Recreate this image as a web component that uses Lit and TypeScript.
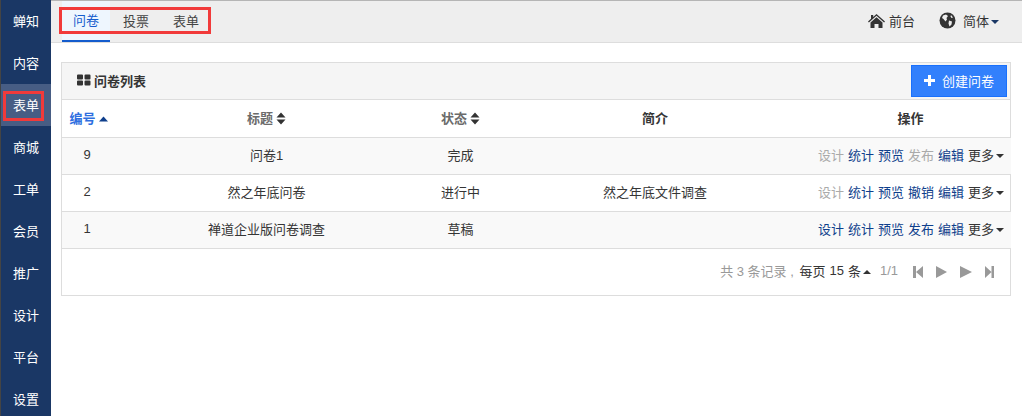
import { LitElement, html, css } from "lit";
import { customElement } from "lit/decorators.js";

const NAV = ["蝉知", "内容", "表单", "商城", "工单", "会员", "推广", "设计", "平台", "设置"];
const ROWS = [
  { id: "9", title: "问卷1", status: "完成", desc: "", off: [true, false, false, true], last: "发布" },
  { id: "2", title: "然之年底问卷", status: "进行中", desc: "然之年底文件调查", off: [true, false, false, false], last: "撤销" },
  { id: "1", title: "禅道企业版问卷调查", status: "草稿", desc: "", off: [false, false, false, false], last: "发布" },
];

const sortIcon = html`<svg class="sort" width="10" height="13" viewBox="0 0 10 13"><path d="M5 .5 9.500 5.500H.5zM.5 7.500h9L5 12.500z" fill="#333"/></svg>`;
const upIcon = html`<svg class="up" width="9" height="6" viewBox="0 0 9 6"><path d="M4.500 .5 9 5.500H0z" fill="#0f3f8c"/></svg>`;
const caret = (c = "#333") => html`<svg class="caret" width="8" height="4" viewBox="0 0 8 4"><path d="M0 0h8L4 4z" fill="${c}"/></svg>`;

@customElement("app-root")
export class AppRoot extends LitElement {
  static styles = css`
    :host { display: block; width: 1022px; height: 416px; overflow: hidden; position: relative; background: #fff;
      font-family: "Liberation Sans", "Noto Sans CJK SC", sans-serif; font-size: 13px; color: #353535; }
    .page { display: flex; height: 416px; }
    .side { width: 50px; margin-left: 1px; background: #1a3765; flex: none; box-shadow: -1px 0 0 #444; }
    .nav { height: 42px; box-sizing: border-box; padding-bottom: 2px; display: flex; align-items: center; justify-content: center; color: #fff; }
    .nav.on { background: #475d84; }
    .main { flex: 1; min-width: 0; display: flex; flex-direction: column; }
    .top { height: 41px; background: #eee; border-bottom: 1px solid #ddd; border-top: 1px solid #b5b5b5; display: flex; justify-content: space-between; padding-left: 11px; padding-right: 23px; }
    .tabs { display: flex; }
    .tab { width: 50px; display: flex; align-items: center; justify-content: center; color: #444; padding-bottom: 2px; box-sizing: border-box; }
    .tab.on { width: 48px; margin-right: 1px; color: #145ccd; background: #eef6fe; border-bottom: 2px solid #145ccd; padding-bottom: 2px; }
    .right { display: flex; align-items: center; gap: 24px; color: #333; padding-bottom: 2px; }
    .ri { display: flex; align-items: center; gap: 4px; }
    .ri.lang { gap: 7px; }
    .content { padding: 19px 11px 0 10px; }
    .panel { border: 1px solid #ddd; }
    .head { height: 36px; background: #f5f5f5; border-bottom: 1px solid #ddd; display: flex; align-items: center; justify-content: space-between; padding-left: 15px; padding-right: 3px; font-weight: bold; color: #353535; }
    .title { display: flex; align-items: center; gap: 3px; padding-bottom: 2px; }
    .btn { width: 96px; height: 32px; box-sizing: border-box; background: #3280fc; border: 1px solid #1970fc; color: #fff; font: inherit; font-weight: normal; display: flex; align-items: center; justify-content: center; gap: 7px; padding: 0 0 2px; }
    table { border-collapse: collapse; table-layout: fixed; width: 949px; }
    th, td { padding: 0 0 3px; text-align: center; border-bottom: 1px solid #ddd; height: 33px; box-sizing: content-box; }
    th { font-weight: bold; color: #353535; height: 35px; padding-bottom: 2px; }
    th.s { color: #6b6b6b; }
    th.a { color: #2f6fe0; padding-left: 3px; }
    .sort { margin-left: 3px; vertical-align: -2px; }
    .up { margin-left: 3px; vertical-align: 1px; }
    tr.odd td { background: #f9f9f9; }
    td.ops { text-align: right; padding-right: 7px; white-space: nowrap; }
    .op { color: #0f3f8c; margin-left: 4px; }
    .op.off { color: #aaa; }
    .op.more { color: #353535; }
    .caret { margin-left: 2px; vertical-align: 2px; }
    .foot { height: 46px; display: flex; align-items: center; justify-content: flex-end; padding: 0 16px 3px 0; box-sizing: border-box; color: #353535; }
    .foot .mut { color: #999; white-space: pre; }
    .foot .count { margin-right: 2px; }
    .foot .n { margin: 0 4px; }
    .foot .pages { margin-left: 9px; }
    .pg { display: flex; gap: 13px; margin-left: 15px; align-items: center; padding-top: 3px; }
    .red { position: absolute; border: 3px solid #f13a3a; box-sizing: border-box; pointer-events: none; }
    .r1 { left: 59px; top: 7px; width: 152px; height: 27px; }
    .r2 { left: 3px; top: 91px; width: 41px; height: 30px; }
  `;

  render() {
    return html`
      <div class="page">
        <div class="side">
          ${NAV.map((n, i) => html`<div class="nav ${i === 2 ? "on" : ""}">${n}</div>`)}
        </div>
        <div class="main">
          <div class="top">
            <div class="tabs">
              <div class="tab on">问卷</div><div class="tab">投票</div><div class="tab">表单</div>
            </div>
            <div class="right">
              <div class="ri">
                <svg width="17" height="14" viewBox="0 0 17 14"><path fill="#333" d="M8.500 0 17 7.400l-.9 1-7.600-6.600L.9 8.400 0 7.400 3 4.800V1h2.200v1.900zM8.500 3.200 14.500 8.400V14h-4V10h-4v4h-4V8.400z"/></svg>
                前台
              </div>
              <div class="ri lang">
                <svg width="17" height="17" viewBox="0 0 17 17"><circle cx="8.500" cy="8.500" r="8" fill="#333"/><path fill="#eee" d="M4 3.500 7 2.500 9 4 7.500 6 8 7.500 6.500 9.500 4.500 7 3 6zM10 8.500l3 1-.5 3-2 2-1-3zM12 3l2 2.500-1.500 .5-1-1.500z"/></svg>
                <span>简体${caret("#1a3765")}</span>
              </div>
            </div>
          </div>
          <div class="content">
            <div class="panel">
              <div class="head">
                <div class="title">
                  <svg width="14" height="12" viewBox="0 0 14 12"><path fill="#333" d="M0 1.500A1 1 0 0 1 1 .5h4a1 1 0 0 1 1 1v3a1 1 0 0 1-1 1H1a1 1 0 0 1-1-1zM7.500 1.500a1 1 0 0 1 1-1h4a1 1 0 0 1 1 1v3a1 1 0 0 1-1 1h-4a1 1 0 0 1-1-1zM0 7.500a1 1 0 0 1 1-1h4a1 1 0 0 1 1 1v3a1 1 0 0 1-1 1H1a1 1 0 0 1-1-1zM7.500 7.500a1 1 0 0 1 1-1h4a1 1 0 0 1 1 1v3a1 1 0 0 1-1 1h-4a1 1 0 0 1-1-1z"/></svg>
                  问卷列表
                </div>
                <button class="btn">
                  <svg width="11" height="11" viewBox="0 0 11 11"><path fill="#fff" d="M4 0h3v4h4v3H7v4H4V7H0V4h4z"/></svg>
                  创建问卷
                </button>
              </div>
              <table>
                <colgroup><col style="width:50px"/><col style="width:309px"/><col style="width:79px"/><col style="width:310px"/><col style="width:201px"/></colgroup>
                <tr>
                  <th class="a">编号${upIcon}</th>
                  <th class="s">标题${sortIcon}</th>
                  <th class="s">状态${sortIcon}</th>
                  <th>简介</th>
                  <th>操作</th>
                </tr>
                ${ROWS.map((r, i) => html`
                  <tr class="${i % 2 === 0 ? "odd" : ""}">
                    <td>${r.id}</td><td>${r.title}</td><td>${r.status}</td><td>${r.desc}</td>
                    <td class="ops">
                      <span class="op ${r.off[0] ? "off" : ""}">设计</span><span class="op">统计</span><span class="op">预览</span><span class="op ${r.off[3] ? "off" : ""}">${r.last}</span><span class="op">编辑</span><span class="op more">更多${caret()}</span>
                    </td>
                  </tr>`)}
              </table>
              <div class="foot">
                <span class="mut count">共 3 条记录 , </span><span>每页</span><span class="n">15</span><span>条<svg class="caret" width="8" height="4" viewBox="0 0 8 4"><path d="M4 0l4 4H0z" fill="#333"/></svg></span>
                <span class="mut pages">1/1</span>
                <div class="pg">
                  <svg width="10" height="12" viewBox="0 0 10 12"><path fill="#999" d="M0 0h3v12H0zM10 0v12L3 6z"/></svg>
                  <svg width="11" height="12" viewBox="0 0 11 12"><path fill="#999" d="M0 0l11 6-11 6z"/></svg>
                  <svg width="12" height="12" viewBox="0 0 12 12"><path fill="#999" d="M0 0l12 6-12 6z"/></svg>
                  <svg width="9" height="12" viewBox="0 0 9 12"><path fill="#999" d="M0 0l6.500 6L0 12zM6.500 0H9v12H6.500z"/></svg>
                </div>
              </div>
            </div>
          </div>
        </div>
      </div>
      <div class="red r1"></div>
      <div class="red r2"></div>
    `;
  }
}
